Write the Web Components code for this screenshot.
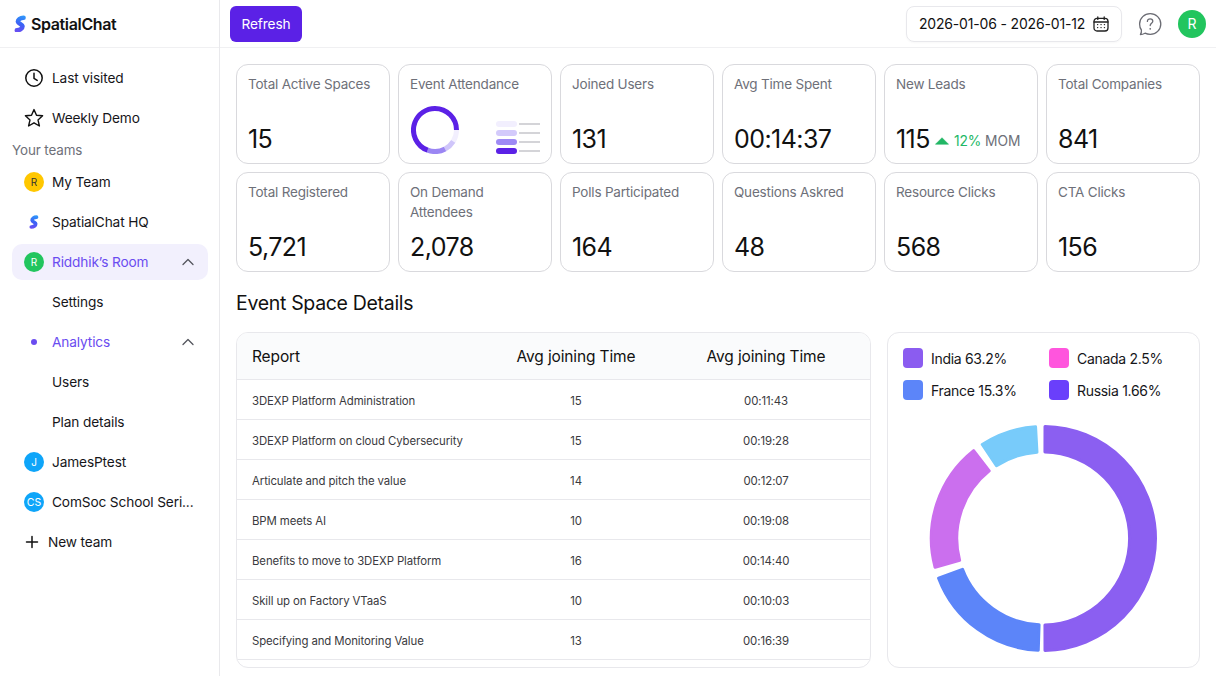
<!DOCTYPE html>
<html><head><meta charset="utf-8">
<style>
html,body{margin:0;padding:0;height:100%;overflow:hidden;background:#fff}
body{font-family:"Inter","Liberation Sans",sans-serif;color:#111}
</style></head>
<body>
<app-shell>
  <side-bar slot="side">
    <nav-item icon="clock">Last visited</nav-item>
    <nav-item icon="star">Weekly Demo</nav-item>
    <nav-cap>Your teams</nav-cap>
    <nav-item avatar="R" color="#FFC700" ink="#333">My Team</nav-item>
    <nav-item icon="logo">SpatialChat HQ</nav-item>
    <nav-item avatar="R" color="#22C55E" ink="#fff" active chevron>Riddhik’s Room</nav-item>
    <nav-item sub>Settings</nav-item>
    <nav-item icon="dot" accent chevron>Analytics</nav-item>
    <nav-item sub>Users</nav-item>
    <nav-item sub>Plan details</nav-item>
    <nav-item avatar="J" color="#0EA5F9" ink="#fff">JamesPtest</nav-item>
    <nav-item avatar="CS" color="#0EA5F9" ink="#fff">ComSoc School Seri...</nav-item>
    <nav-item icon="plus" tight>New team</nav-item>
  </side-bar>
  <top-bar slot="top"></top-bar>
  <stat-grid slot="main">
    <stat-card label="Total Active Spaces" value="15"></stat-card>
    <stat-card label="Event Attendance"><mini-chart></mini-chart></stat-card>
    <stat-card label="Joined Users" value="131"></stat-card>
    <stat-card label="Avg Time Spent" value="00:14:37"></stat-card>
    <stat-card label="New Leads" value="115" trend="12%"></stat-card>
    <stat-card label="Total Companies" value="841"></stat-card>
    <stat-card label="Total Registered" value="5,721"></stat-card>
    <stat-card label="On Demand Attendees" value="2,078"></stat-card>
    <stat-card label="Polls Participated" value="164"></stat-card>
    <stat-card label="Questions Askred" value="48"></stat-card>
    <stat-card label="Resource Clicks" value="568"></stat-card>
    <stat-card label="CTA Clicks" value="156"></stat-card>
  </stat-grid>
  <section-title slot="main">Event Space Details</section-title>
  <detail-row slot="main">
    <report-table></report-table>
    <donut-card></donut-card>
  </detail-row>
</app-shell>
<script>
const FONT='"Inter","Liberation Sans",sans-serif';
const LOGO=(s)=>`<svg width="${s}" height="${s*1.45}" viewBox="0 0 20 29" style="display:block"><defs><linearGradient id="lg" gradientUnits="userSpaceOnUse" x1="14" y1="0" x2="6" y2="29"><stop offset="0" stop-color="#2E9BFA"/><stop offset=".5" stop-color="#3B62F5"/><stop offset="1" stop-color="#6E4BF2"/></linearGradient></defs><path fill="none" stroke="url(#lg)" stroke-width="7.4" stroke-linecap="round" stroke-linejoin="round" d="M15.4 4.4C10 4.4 6 7.6 6.4 11C6.8 14.4 13.6 14.8 13.7 18C13.8 21.4 9.8 24.6 4.6 24.6"/></svg>`;
function def(name,html,init){customElements.define(name,class extends HTMLElement{
  constructor(){super();this.attachShadow({mode:'open'});}
  connectedCallback(){this.shadowRoot.innerHTML=typeof html==='function'?html(this):html;if(init)init(this);}
});}

def('app-shell',`<style>
:host{display:grid;grid-template-columns:220px 1fr;grid-template-rows:48px 1fr;width:1216px;height:676px;overflow:hidden;box-sizing:border-box}
.side{grid-row:1/3;border-right:1px solid #E9E9EC;box-sizing:border-box;min-height:0}
.top{border-bottom:1px solid #F0F0F2;box-sizing:border-box}
.main{padding:16px 16px 8px;display:flex;flex-direction:column;min-height:0;box-sizing:border-box}
</style>
<div class="side"><slot name="side"></slot></div>
<div class="top"><slot name="top"></slot></div>
<div class="main"><slot name="main"></slot></div>`);

def('side-bar',`<style>
:host{display:block;font-size:14px}
.brand{height:48px;box-sizing:border-box;border-bottom:1px solid #F0F0F2;display:flex;align-items:center;gap:5px;padding-left:13.5px;font-weight:600;font-size:16px;color:#111;letter-spacing:-.35px}
nav{padding:10px 11px 0 12px;display:flex;flex-direction:column}
</style>
<div class="brand">${LOGO(12.4)}<span>SpatialChat</span></div>
<nav><slot></slot></nav>`);

def('nav-cap',`<style>:host{display:block;flex:none;font-size:13.4px;letter-spacing:-.1px;color:#6E7079;height:24px;line-height:24px}</style><slot></slot>`);

const ICONS={
 clock:`<svg width="20" height="20" viewBox="0 0 20 20" fill="none" stroke="#111" stroke-width="1.5" stroke-linecap="round" stroke-linejoin="round"><circle cx="10" cy="10" r="8.2"/><path d="M10 5.2V10.4L13.2 12.4"/></svg>`,
 star:`<svg width="20" height="20" viewBox="0 0 20 20" fill="none" stroke="#111" stroke-width="1.4" stroke-linejoin="round"><path d="M10 1.6L12.5 7.2L18.6 7.8L14 11.9L15.4 18L10 14.8L4.6 18L6 11.9L1.4 7.8L7.5 7.2Z"/></svg>`,
 dot:`<svg width="20" height="20" viewBox="0 0 20 20"><circle cx="10" cy="10" r="3" fill="#6A4CF0"/></svg>`,
 plus:`<svg width="16" height="16" viewBox="0 0 16 16" fill="none" stroke="#111" stroke-width="1.5" stroke-linecap="round"><path d="M8 2.5V13.5M2.5 8H13.5"/></svg>`,
 logo:`<span style="display:flex;width:20px;justify-content:center">${LOGO(9.8)}</span>`
};
const CHEV=`<svg width="14" height="14" viewBox="0 0 14 14" fill="none" stroke="#55565E" stroke-width="1.3" stroke-linecap="round" stroke-linejoin="round"><path d="M2 9.5L7 4.5L12 9.5"/></svg>`;
def('nav-item',el=>{
 const a=el.hasAttribute('active'),ac=el.hasAttribute('accent'),sub=el.hasAttribute('sub'),tight=el.hasAttribute('tight');
 const av=el.getAttribute('avatar'),ic=el.getAttribute('icon');
 let lead='';
 if(av)lead=`<span class="av" style="background:${el.getAttribute('color')};color:${el.getAttribute('ink')}">${av}</span>`;
 else if(ic)lead=`<span class="ic">${ICONS[ic]}</span>`;
 return `<style>
 :host{display:flex;height:40px;align-items:center;box-sizing:border-box;flex:none}
 .row{flex:1;height:36px;display:flex;align-items:center;padding:0 13px 0 12px;gap:8px;border-radius:10px;background:${a?'#F2F0FD':'transparent'};color:${a||ac?'#6A4CF0':'#16161A'};font-size:13.7px;letter-spacing:-.14px;white-space:nowrap}
 .av{width:20px;height:20px;border-radius:50%;display:flex;align-items:center;justify-content:center;font-size:${av&&av.length>1?'10.5':'10'}px;letter-spacing:0;flex:none}
 .ic{width:${tight?16:20}px;height:20px;display:flex;align-items:center;justify-content:center;flex:none}
 .t{flex:1;margin-top:-1px;${sub?'padding-left:28px':''}}
 .c{display:flex}
 </style><div class="row">${lead}<span class="t"><slot></slot></span>${el.hasAttribute('chevron')?`<span class="c">${CHEV}</span>`:''}</div>`;
});

def('top-bar',`<style>
:host{display:flex;align-items:center;justify-content:space-between;height:47px;padding:0 10px 0 10px;box-sizing:border-box}
.btn{height:36px;width:72px;border:0;border-radius:6px;background:#5B21E6;color:#fff;font:400 13.7px ${FONT};letter-spacing:-.1px;padding:0}
.r{display:flex;align-items:center}
.date{height:36px;width:216px;box-sizing:border-box;border:1px solid #E8E8EC;border-radius:8px;display:flex;align-items:center;justify-content:center;gap:8px;font-size:14px;color:#111;letter-spacing:-.17px;box-shadow:0 1px 2px rgba(0,0,0,.03)}
.q{margin-left:16px;display:flex}
.u{margin-left:16px;width:28px;height:28px;border-radius:50%;background:#22C55E;color:#fff;display:flex;align-items:center;justify-content:center;font-size:14px}
</style>
<button class="btn">Refresh</button>
<div class="r"><div class="date"><span>2026-01-06 - 2026-01-12</span>
<svg width="16" height="16" viewBox="0 0 16 16" fill="none" stroke="#222" stroke-width="1.3" stroke-linecap="round"><rect x="1" y="2.4" width="14" height="12.6" rx="3"/><path d="M1 6H15M4.8 1V3.4M11.2 1V3.4"/><path stroke-width="1.4" d="M4.6 8.6h.1M8 8.6h.1M11.4 8.6h.1M4.6 11.6h.1M8 11.6h.1M11.4 11.6h.1"/></svg></div>
<span class="q"><svg width="24" height="24" viewBox="0 0 24 24" fill="none" stroke="#6B6C74" stroke-width="1.3" stroke-linecap="round" stroke-linejoin="round"><path d="M12.2 1.6C18 1.6 22.8 6.2 22.8 12C22.8 17.8 18 22.4 12.2 22.4C10.4 22.4 8.6 22 7 21.2C5.6 22 3.8 22.6 2.4 22.6C3.2 21.2 3.6 19.6 3.4 18C2.2 16.4 1.6 14.2 1.6 12C1.6 6.2 6.4 1.6 12.2 1.6Z"/><path d="M9.4 9.4C9.4 7.9 10.6 6.9 12.1 6.9C13.6 6.9 14.8 7.9 14.8 9.3C14.8 11.2 12.2 11.5 12.2 13.5"/><path d="M12.2 16.8h.05" stroke-width="1.7"/></svg></span>
<span class="u">R</span></div>`);

def('stat-grid',`<style>:host{display:grid;grid-template-columns:repeat(6,154px);grid-auto-rows:100px;gap:8px}</style><slot></slot>`);

def('stat-card',el=>{
 const v=el.getAttribute('value'),t=el.getAttribute('trend');
 return `<style>
 :host{display:block;border:1px solid #D9D9DD;border-radius:12px;box-sizing:border-box;position:relative;overflow:hidden}
 .in{height:100%;box-sizing:border-box;padding:9px 11px 0;display:flex;flex-direction:column}
 .l{font-size:13.5px;line-height:20px;color:#6E7079;letter-spacing:-.2px}
 .b{margin-top:auto;display:flex;align-items:center;height:48px}
 .v{font-size:25px;line-height:32px;color:#111;letter-spacing:-.55px}
 .t{display:flex;align-items:center;margin-left:5px;font-size:13.8px;letter-spacing:-.12px;margin-top:4px}
 .g{color:#22B765;margin-left:5px}.m{color:#6E7079;margin-left:4px}
 </style><div class="in"><div class="l">${el.getAttribute('label')}</div>
 <slot></slot>
 ${v?`<div class="b"><span class="v">${v}</span>${t?`<span class="t"><svg width="14" height="8" viewBox="0 0 15 8"><path d="M7.5 0.5L14.5 7.5H.5Z" fill="#22B765" stroke="#22B765" stroke-width=".6" stroke-linejoin="round"/></svg><span class="g">${t}</span><span class="m">MOM</span></span>`:''}</div>`:''}</div>`;
});

def('mini-chart',el=>{
 const C=2*Math.PI*21.5;
 const arc=(from,to,c)=>`<circle cx="24" cy="24" r="21.5" fill="none" stroke="${c}" stroke-width="5" stroke-dasharray="${(to-from)/360*C} ${C}" transform="rotate(${from-90} 24 24)"/>`;
 const row=(c)=>`<span class="r"><i style="background:${c}"></i><b></b></span>`;
 return `<style>
 :host{position:absolute;left:12px;top:41px;right:11px;display:flex;justify-content:space-between;align-items:flex-start}
 svg{display:block}
 .bars{display:flex;flex-direction:column;gap:3px;margin-top:15px}
 .r{display:flex;align-items:center;gap:2px;height:6px}
 i{display:block;width:21px;height:6px;border-radius:3px}
 b{display:block;width:21px;height:1.5px;background:#D4D4D8}
 </style><svg width="48" height="48" viewBox="0 0 48 48">${arc(0,90,'#5B21E6')}${arc(90,122,'#F2EFFE')}${arc(122,152,'#CFC5FA')}${arc(152,200,'#9B86F3')}${arc(200,360,'#5B21E6')}</svg>
 <div class="bars">${row('#F2EFFE')}${row('#D3CAFB')}${row('#9E8AF5')}${row('#5B21E6')}</div>`;
});

def('section-title',`<style>:host{display:block;font-size:19.5px;line-height:28px;height:28px;color:#111;margin-top:17px;letter-spacing:-.32px;flex:none}</style><slot></slot>`);
def('detail-row',`<style>:host{display:grid;grid-template-columns:635px 313px;gap:16px;margin-top:15px;height:336px;flex:none}</style><slot></slot>`);

const ROWS=[["3DEXP Platform Administration",15,"00:11:43"],["3DEXP Platform on cloud Cybersecurity",15,"00:19:28"],["Articulate and pitch the value",14,"00:12:07"],["BPM meets AI",10,"00:19:08"],["Benefits to move to 3DEXP Platform",16,"00:14:40"],["Skill up on Factory VTaaS",10,"00:10:03"],["Specifying and Monitoring Value",13,"00:16:39"]];
def('report-table',`<style>
:host{display:block;border:1px solid #E8E8EC;border-radius:12px;overflow:hidden;box-sizing:border-box}
.row{display:grid;grid-template-columns:244px 190px 190px;align-items:center;height:40px;box-sizing:border-box;padding-top:2px;border-bottom:1px solid #E8E8EC;font-size:11.4px;color:#3A3A40;letter-spacing:-.1px}
.row span:first-child{padding-left:15px}
.row span+span{text-align:center}
.h{height:47px;padding-top:0;background:#FAFBFC;font-size:15.5px;color:#111;letter-spacing:-.13px}
</style>
<div class="row h"><span>Report</span><span>Avg joining Time</span><span>Avg joining Time</span></div>
${ROWS.map(r=>`<div class="row"><span>${r[0]}</span><span>${r[1]}</span><span>${r[2]}</span></div>`).join('')}`);

def('donut-card',()=>{
 const cx=155.3,cy=205.4,R=112,r=86.5,sw=1.5;
 const pt=(rad,a)=>{const t=a*Math.PI/180;return [(cx+rad*Math.sin(t)).toFixed(2),(cy-rad*Math.cos(t)).toFixed(2)].join(' ');};
 const seg=(a,b,c)=>{
   const da=d=>sw/d*180/Math.PI;
   const oa=a+da(R),ob=b-da(R),ia=a+da(r),ib=b-da(r);
   const large=(ob-oa)>180?1:0;
   return `<path d="M${pt(R,oa)}A${R} ${R} 0 ${large} 1 ${pt(R,ob)}L${pt(r,ib)}A${r} ${r} 0 ${large} 0 ${pt(r,ia)}Z" fill="${c}" stroke="${c}" stroke-width="3" stroke-linejoin="round"/>`;
 };
 const leg=(c,t)=>`<div class="li"><i style="background:${c}"></i><span>${t}</span></div>`;
 return `<style>
 :host{display:block;border:1px solid #E8E8EC;border-radius:12px;box-sizing:border-box;position:relative;overflow:hidden}
 .legend{display:grid;grid-template-columns:146px 1fr;row-gap:12px;padding:15px 15px 0}
 .li{display:flex;align-items:center;gap:8px;height:20px;font-size:14px;color:#16161A;letter-spacing:-.3px;white-space:nowrap}
 i{width:20px;height:20px;border-radius:4px;display:block;flex:none}
 svg{position:absolute;left:0;top:0}
 </style>
 <div class="legend">${leg('#8B5CF0','India 63.2%')}${leg('#FF55DD','Canada 2.5%')}${leg('#5C85F9','France 15.3%')}${leg('#6A3FFB','Russia 1.66%')}</div>
 <svg width="311" height="334" viewBox="0 0 311 334">${seg(0.1,179.9,'#8B5FF1')}${seg(181.8,250,'#5C85F9')}${seg(254.3,322.3,'#CB6FEE')}${seg(326.2,356.8,'#78CBFA')}</svg>`;
});
</script>
</body></html>
